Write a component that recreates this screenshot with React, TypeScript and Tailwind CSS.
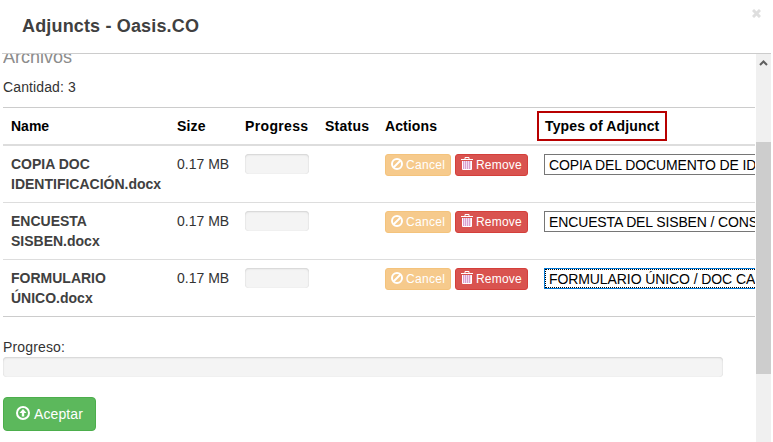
import React from "react";

const files = [
  { name: ["COPIA DOC", "IDENTIFICACIÓN.docx"], type: "COPIA DEL DOCUMENTO DE ID", tracking: "tracking-[-0.11px]", focused: false },
  { name: ["ENCUESTA", "SISBEN.docx"], type: "ENCUESTA DEL SISBEN / CONS", tracking: "tracking-[-0.13px]", focused: false },
  { name: ["FORMULARIO", "ÚNICO.docx"], type: "FORMULARIO ÚNICO / DOC CAR", tracking: "tracking-[-0.09px]", focused: true },
];

const columns = "grid grid-cols-[166px_68px_80px_60px_160px_218px]";
const track = "rounded bg-[#f4f4f4] shadow-[inset_0_1px_2px_rgba(0,0,0,0.13),inset_0_0_1px_rgba(0,0,0,0.12)]";

function BanIcon() {
  return (
    <svg className="mb-0.5" width="12" height="12" viewBox="0 0 12 12" fill="none" stroke="currentColor" strokeWidth="2">
      <circle cx="6" cy="6" r="5" />
      <path d="M2.5 9.5L9.5 2.5" />
    </svg>
  );
}

function TrashIcon() {
  return (
    <svg className="mb-[3px]" width="12" height="13" viewBox="0 0 12 13" fill="none" stroke="currentColor">
      <path fill="#d9a0d0" stroke="none" d="M1 4H11V12H1Z" />
      <path d="M4 2V0.5H8V2M0 2.5H12" />
      <path d="M1.5 4V12.5H10.5V4" />
      <path strokeOpacity="0.65" d="M3.5 4V12M5.5 4V12M7.5 4V12M9.5 4V12" />
    </svg>
  );
}

function UploadIcon() {
  return (
    <svg className="mb-0.5" width="14" height="14" viewBox="0 0 14 14" fill="none" stroke="currentColor" strokeWidth="2">
      <circle cx="7" cy="7" r="6" />
      <path fill="currentColor" stroke="none" d="M7 3L10.5 7H8.2V10.5H5.8V7H3.5Z" />
    </svg>
  );
}

export default function App() {
  return (
    <div className="h-[442px] w-[773px] overflow-hidden bg-white font-['Liberation_Sans',Arial,sans-serif] text-sm/5 text-[#333]">
      <header className="ml-[2px] flex h-[54px] w-[769px] items-start justify-between border-b border-[#ccc]">
        <h1 className="mt-[14px] ml-[20px] text-[18px]/6 font-bold tracking-[0.16px] text-[#404040]">Adjuncts - Oasis.CO</h1>
        <svg className="mt-[9px] mr-[10px]" width="9" height="9" viewBox="0 0 9 9" stroke="#dedede" strokeWidth="3">
          <path d="M1 1L8 8M8 1L1 8" />
        </svg>
      </header>
      <div className="flex h-[388px]">
        <main className="ml-[3px] w-[753px] overflow-hidden pr-px">
          <div className="h-[23px] overflow-hidden">
            <h2 className="-mt-[9px] text-[18px]/6 text-[#8c8c8c]">Archivos</h2>
          </div>
          <p className="tracking-[0.12px]">Cantidad: 3</p>
          <div className="mt-[10px] w-[752px] overflow-hidden border-y border-[#ccc]">
            <div className={`${columns} h-[38px] border-b-2 border-[#ddd] pl-2 pt-2 font-bold text-black`}>
              <span>Name</span>
              <span className="tracking-[0.15px]">Size</span>
              <span className="tracking-[0.35px]">Progress</span>
              <span className="tracking-[0.25px]">Status</span>
              <span className="tracking-[0.1px]">Actions</span>
              <div className="-mt-[5px] -ml-[8px] h-[30px] w-[130px] border-2 border-[#b80000] pt-[3px] pl-[6px] tracking-[0.15px]">
                Types of Adjunct
              </div>
            </div>
            {files.map((f) => (
              <div key={f.type} className={`${columns} h-[57px] border-b border-[#ddd] pl-2 pt-2 last:h-[56px] last:border-b-0`}>
                <div className="font-bold whitespace-nowrap text-[#404040]">
                  {f.name[0]}
                  <br />
                  {f.name[1]}
                </div>
                <span>0.17 MB</span>
                <div className={`${track} h-5 w-16`} />
                <span />
                <div className="flex items-start gap-1 text-xs/5 text-white">
                  <button className="flex h-[22px] w-[66px] items-center gap-[3px] rounded-[3px] border border-[#f4c37c] bg-[#f6ca8c] pl-[5px]">
                    <BanIcon />
                    <span className="tracking-[0.3px]">Cancel</span>
                  </button>
                  <button className="flex h-[22px] w-[73px] items-center gap-[3px] rounded-[3px] border border-[#d43f3a] bg-[#d9534f] pl-[5px]">
                    <TrashIcon />
                    <span className="tracking-[0.2px]">Remove</span>
                  </button>
                </div>
                <div
                  className={
                    f.focused
                      ? "-ml-px h-[21px] w-[230px] border border-[#0078d7] text-black"
                      : "-ml-px h-[21px] w-[230px] border border-[#767676] text-black"
                  }
                >
                  <div
                    className={
                      f.focused
                        ? "h-[19px] border border-dotted border-black pl-[3px] leading-[19px] whitespace-nowrap"
                        : "h-[19px] pl-1 leading-[21px] whitespace-nowrap"
                    }
                  >
                    <span className={f.tracking}>{f.type}</span>
                  </div>
                </div>
              </div>
            ))}
          </div>
          <p className="mt-5 tracking-[0.15px]">Progreso:</p>
          <div className={`${track} h-5 w-[720px]`} />
          <button className="mt-5 flex h-[34px] w-[93px] items-center gap-1 rounded border border-[#4cae4c] bg-[#5cb85c] pl-3 text-white">
            <UploadIcon />
            <span className="tracking-[0.1px]">Aceptar</span>
          </button>
        </main>
        <aside className="flex w-[15px] flex-col bg-[#f0f0f0]">
          <div className="flex h-[88px] justify-center pt-[6px]">
            <svg width="9" height="6" viewBox="0 0 9 6" fill="none" stroke="#606060" strokeWidth="2">
              <path d="M1 5L4.5 1.5L8 5" />
            </svg>
          </div>
          <div className="h-[232px] bg-[#cdcdcd]" />
        </aside>
      </div>
    </div>
  );
}
